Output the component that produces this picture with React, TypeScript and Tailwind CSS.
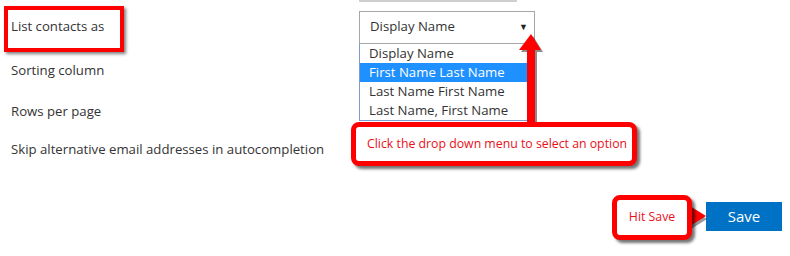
const font = { fontFamily: '"Open Sans", "Segoe UI", sans-serif' }

const options = ['Display Name', 'First Name Last Name', 'Last Name First Name', 'Last Name, First Name']

/* ─── Red callout box ───────────────────────────────────────────── */

function Callout({ className, children }: { className: string; children?: React.ReactNode }) {
  return (
    <div
      className={`absolute rounded-[8px] border-[5px] border-[#ff0000] bg-white shadow-[3px_3px_3px_rgba(0,0,0,0.55)] flex items-center text-[12.3px] text-[#e8101a] ${className}`}
    >
      {children}
    </div>
  )
}

export default function App() {
  return (
    <div className="relative w-[790px] h-[256px] bg-white overflow-hidden text-[13.2px] text-[#333]" style={font}>
      {/* previous field edge */}
      <div className="ml-[359px] w-[158px] h-[2px] bg-[#cfcfcf]" />

      {/* ── Rows ─────────────────────────────────────────────── */}
      <div className="flex flex-col pl-[11px]">
        <div className="mt-[9px] flex items-center h-[32px]">
          <span className="w-[348px]">List contacts as</span>
          <div className="w-[176px] h-[33px] border border-[#a6a6a6] flex items-center justify-between pl-[10px] pr-[6px]">
            <span>Display Name</span>
            <span className="text-[9px] text-[#222]">▼</span>
          </div>
        </div>
        <div className="mt-[12px] flex items-center h-[32px]">
          <span>Sorting column</span>
        </div>
        <div className="mt-[9px] flex items-center h-[32px]">
          <span>Rows per page</span>
        </div>
        <div className="mt-[6px] flex items-center h-[32px]">
          <span>Skip alternative email addresses in autocompletion</span>
        </div>
        <div className="mt-[36px] flex justify-end pr-[8px]">
          <button className="w-[76px] h-[29px] bg-[#0072c6] text-white text-[15px]">Save</button>
        </div>
      </div>

      {/* ── Open dropdown list ───────────────────────────────── */}
      <div className="absolute left-[359px] top-[44px] w-[176px] border-x border-b border-[#7a9cd3] bg-white flex flex-col">
        {options.map((o, i) => (
          <div
            key={o}
            className={`h-[19px] flex items-center pl-[9px] ${i === 1 ? 'bg-[#1e90ff] text-white' : ''}`}
          >
            {o}
          </div>
        ))}
      </div>

      {/* ── Annotations ──────────────────────────────────────── */}
      <div className="absolute left-[4px] top-[6px] w-[120px] h-[46px] border-[4px] border-[#ff0000] shadow-[2px_2px_3px_rgba(0,0,0,0.5)]" />

      <svg className="absolute left-[510px] top-[30px]" width="40" height="100" viewBox="0 0 40 100">
        <g transform="translate(2,2)" fill="#000" opacity="0.45">
          <polygon points="21,4 31,20 25,20 25,96 17,96 17,20 9,20" />
        </g>
        <polygon points="21,4 31,20 25,20 25,96 17,96 17,20 9,20" fill="#ff0000" />
      </svg>

      <Callout className="left-[351px] top-[122px] w-[286px] h-[44px] pl-[11px]">
        Click the drop down menu to select an option
      </Callout>

      <svg className="absolute left-[688px] top-[204px]" width="20" height="26" viewBox="0 0 20 26">
        <polygon points="2,3 18,13 2,23" fill="#000" opacity="0.4" transform="translate(1,2)" />
        <polygon points="2,2 18,12 2,22" fill="#ff0000" />
      </svg>

      <Callout className="left-[612px] top-[195px] w-[80px] h-[45px] justify-center">Hit Save</Callout>
    </div>
  )
}
